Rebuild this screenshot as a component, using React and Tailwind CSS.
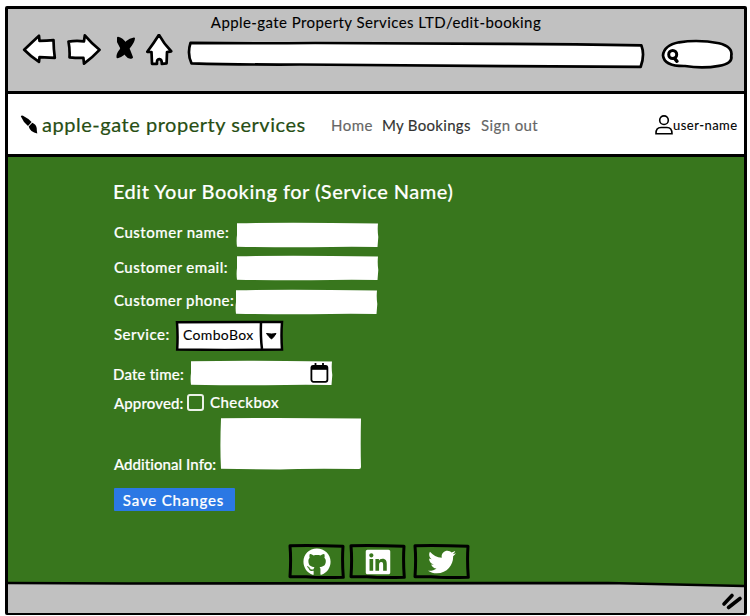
import React from "react";
import { FaGithub, FaLinkedin, FaTwitter } from "react-icons/fa";

function Field({ className, d, viewBox }) {
  return (
    <svg className={className} viewBox={viewBox} fill="white">
      <path d={d} />
    </svg>
  );
}

function TextInput() {
  return (
    <Field
      className="h-[26px] w-[143px] shrink-0"
      viewBox="0 0 143 26"
      d="M1 1.3 Q50 .3 95 1 L142 1.6 Q141.3 8 142.3 15 L141.5 25 Q105 24.6 75 25.3 Q40 25.5 1 24.8 Q.2 19 1 13Z"
    />
  );
}

function SocialBox({ children, className = "" }) {
  return (
    <a className={"relative flex h-[35px] w-[57px] items-center justify-center text-white " + className}>
      <svg className="absolute inset-0 h-full w-full" viewBox="0 0 57 35" fill="none" stroke="black" strokeWidth="3" strokeLinejoin="round">
        <path d="M2 1.8 Q22 1.2 55 2.2 Q54 17 55.3 33.3 Q32 34 18 32.7 L2 32.8 Q3.2 15 2 1.8Z" />
      </svg>
      {children}
    </a>
  );
}

function BrowserBar() {
  return (
    <header className="h-[82px] bg-[#c1c1c1]">
      <div className="flex h-[25px] items-center justify-center pt-[1px] text-[15px] tracking-[0.42px] [-webkit-text-stroke:0.1px]">
        Apple-gate Property Services LTD/edit-booking
      </div>
      <svg className="h-[42px] w-[736px]" viewBox="8 34.2 736 42" fill="white" stroke="black" strokeWidth="2.7" strokeLinejoin="round" strokeLinecap="round">
        <path d="M24.2 50 Q31 43.5 39 36 L39.5 41 Q47 41 53.5 40.3 Q53.6 49 54.8 58 L39.5 57.3 L39 62 Q31 57 24.2 50Z" />
        <path d="M68.5 41.8 Q76 40.4 84 41.5 L84.8 35.6 Q91 43 99.5 50 Q92 58 84 63.8 L83.4 58 Q77 58.2 69.5 57.5 Q70 50 68.5 41.8Z" />
        <path d="M147.3 52 Q154 43 159 35 Q164 44 171.2 51.5 L167 52.3 L166.6 63.5 L161.8 64 Q162 59.5 159.5 59.3 Q156.5 59 157 64 L152 64 L151.5 52.2Z" />
        <g fill="black" strokeWidth="2">
          <path d="M118 38 Q122 38.5 126 44.5 Q129.5 50 132 57.5 Q129 59 126 55 Q121 49 118 42Z" />
          <path d="M134 38.7 Q133.5 43 128.5 48.5 Q124 56 117.5 57.5 Q117 54.5 120.5 50 Q126 40 134 38.7Z" />
        </g>
        <path d="M190.5 43 Q250 43.8 315 43.2 Q430 43.6 505 44 Q575 44.4 641.4 45.6 Q645 55 640.7 67 Q590 66.5 505 66.4 Q390 65 300 64.7 Q240 65 191.5 63.6 Q187 54 190.5 43Z" />
        <path d="M679 42.5 Q699 39.5 719 43.5 Q733 47 731.3 56 Q732.8 64 719 66 Q703 69 685 66.2 Q664 66.5 663 55.5 Q664 45.5 679 42.5Z" />
        <circle cx="672.7" cy="54.7" r="4" strokeWidth="3" />
        <path d="M674.5 58.5 L677 61.5" strokeWidth="3.4" />
      </svg>
    </header>
  );
}

const navItem = "whitespace-nowrap pt-[2px] text-[15px] [-webkit-text-stroke:0.15px]";

function NavBar() {
  return (
    <nav className="box-content flex h-[60px] items-center border-y-[3px] border-black bg-white">
      <svg className="ml-[12px] h-[19px] w-[18px] shrink-0" viewBox="0 0 18 19">
        <path d="M.8 1.2 Q1.5 0 3 .7 Q8.5 3.5 11.6 7 L8 11 Q3.5 7.5 .8 1.2Z" />
        <path d="M8.7 11.6 L12.3 7.8 Q16 9.3 16.7 13 Q16.7 15.5 17.3 18.5 Q10.3 17.5 8.7 11.6Z" />
      </svg>
      <span className="ml-[4px] w-[289px] whitespace-nowrap text-[20px] tracking-[0.53px] text-[#274e13] [-webkit-text-stroke:0.2px]">apple-gate property services</span>
      <span className={navItem + " w-[51px] tracking-[0.5px] text-[#666666]"}>Home</span>
      <span className={navItem + " w-[99px] tracking-[0.3px] text-[#333333]"}>My Bookings</span>
      <span className={navItem + " w-[174px] tracking-[0.4px] text-[#666666]"}>Sign out</span>
      <svg className="mt-[1px] h-[20px] w-[18px] shrink-0" viewBox="0 0 18 20" fill="none" stroke="black" strokeWidth="1.6">
        <circle cx="9" cy="5.2" r="4.3" />
        <path d="M1 18.7 Q.8 12.5 6 12.5 H12 Q17 12.5 17 18.7Z" />
      </svg>
      <span className="whitespace-nowrap pt-[3px] text-[13px] tracking-[0.48px] [-webkit-text-stroke:0.1px]">user-name</span>
    </nav>
  );
}

const label = "shrink-0 whitespace-nowrap text-[15px] leading-[20px] font-medium [-webkit-text-stroke:0.2px]";

function BookingForm() {
  return (
    <main className="flex h-[424px] flex-col bg-[#38761d] pl-[105px] text-white">
      <h1 className="mt-[20px] h-[28px] whitespace-nowrap text-[20px] leading-[28px] font-medium tracking-[0.49px] [-webkit-text-stroke:0.15px]">
        Edit Your Booking for (Service Name)
      </h1>
      <div className="mt-[17px] flex h-[26px] items-center">
        <label className={label + " w-[123px] pb-[6px] pl-[1px] tracking-[0.52px]"}>Customer name:</label>
        <TextInput />
      </div>
      <div className="mt-[7px] flex h-[26px] items-center">
        <label className={label + " w-[123px] pb-[2px] pl-[1px] tracking-[0.48px]"}>Customer email:</label>
        <TextInput />
      </div>
      <div className="mt-[8px] flex h-[26px] items-center">
        <label className={label + " w-[122px] pb-[4px] pl-[1px] tracking-[0.45px]"}>Customer phone:</label>
        <TextInput />
      </div>
      <div className="mt-[5px] flex h-[31px] items-center">
        <label className={label + " w-[62px] pb-[4px] pl-[1px] tracking-[0.5px]"}>Service:</label>
        <div className="relative h-[31px] w-[109px] text-black">
          <svg className="absolute inset-0 h-full w-full" viewBox="0 0 109 31" fill="white" stroke="black" strokeWidth="2.5">
            <path d="M2 2.3 L107 2 Q106 15 107 29.5 L50 30 L2.2 29.4 Q3 15 2 2.3Z" />
            <path d="M86 2 Q85.4 17 87 29" />
            <path d="M91.5 13.5 Q97 14.5 101 13.5 Q99 17 96.5 19 Q94 17 91.5 13.5Z" fill="black" strokeWidth="1" />
          </svg>
          <span className="relative block whitespace-nowrap pl-[8px] text-[14px] leading-[29px] tracking-[0.34px] [-webkit-text-stroke:0.1px]">ComboBox</span>
        </div>
      </div>
      <div className="mt-[9px] flex h-[26px] items-center">
        <label className={label + " w-[77px] pt-[2px] tracking-[0.2px]"}>Date time:</label>
        <div className="relative h-[26px] w-[143px]">
          <TextInput />
          <svg className="absolute top-[2px] left-[120px] h-[22px] w-[19px]" viewBox="0 0 19 22" fill="none" stroke="black" strokeWidth="1.8">
            <rect x="1.4" y="3.8" width="16" height="16" rx="2" />
            <path d="M1.4 5.8 H17.4" strokeWidth="4" />
            <path d="M5.5 1 V5 M13 1 V5" />
          </svg>
        </div>
      </div>
      <div className="mt-[5px] flex h-[22px] items-center">
        <label className={label + " w-[74px] pt-[1px] pl-[1px] tracking-[0.12px]"}>Approved:</label>
        <span className="h-[17px] w-[17px] rounded-[3px] border-2 border-white/90" />
        <span className={label + " ml-[6px] tracking-[0.45px]"}>Checkbox</span>
      </div>
      <div className="mt-[4px] flex h-[53px] items-end">
        <label className={label + " -mb-[4px] w-[107px] pl-[1px] tracking-[0.06px]"}>Additional Info:</label>
        <Field
          className="h-[53px] w-[142px] shrink-0"
          viewBox="0 0 142 53"
          d="M1 1.2 Q65 .5 141 1.5 Q140.4 28 141 50 Q141 52 139 52 Q80 51.5 60 52.5 L1 51.8 Q-.2 30 1 1.2Z"
        />
      </div>
      <button className="mt-[18px] ml-[1px] h-[23px] w-[121px] rounded-[1px] bg-[#2b78e4] pr-[2px] text-[15px] leading-[20px] font-medium tracking-[0.85px] [-webkit-text-stroke:0.2px]">
        <span className="whitespace-nowrap">Save Changes</span>
      </button>
      <div className="mt-[33px] ml-[175px] flex">
        <SocialBox><FaGithub className="relative size-[28px]" /></SocialBox>
        <SocialBox className="ml-[4px]"><FaLinkedin className="relative size-[28px]" /></SocialBox>
        <SocialBox className="ml-[7px]"><FaTwitter className="relative size-[28px]" /></SocialBox>
      </div>
    </main>
  );
}

export default function App() {
  return (
    <div className="h-[616px] w-[750px] overflow-hidden bg-white pt-[6px] pl-[5px] font-['Lato',sans-serif] text-black">
      <div className="h-[609px] w-[742px] rounded-[2px] border-[3px] border-black">
        <BrowserBar />
        <NavBar />
        <BookingForm />
        <footer className="h-[32px]">
          <svg className="h-[32px] w-[736px]" viewBox="0 0 736 32">
            <path d="M0 0 H736 V10 H0Z" fill="#38761d" />
            <path d="M0 2.2 L600 1.8 L736 5 V32 H0Z" fill="#c1c1c1" />
            <path d="M0 2 L120 2.5 L600 2 L736 5" fill="none" stroke="black" strokeWidth="2.7" />
            <path d="M716 23 L724 14.5 M720.5 26.5 L732 17.5" stroke="black" strokeWidth="3.6" strokeLinecap="round" />
          </svg>
        </footer>
      </div>
    </div>
  );
}
